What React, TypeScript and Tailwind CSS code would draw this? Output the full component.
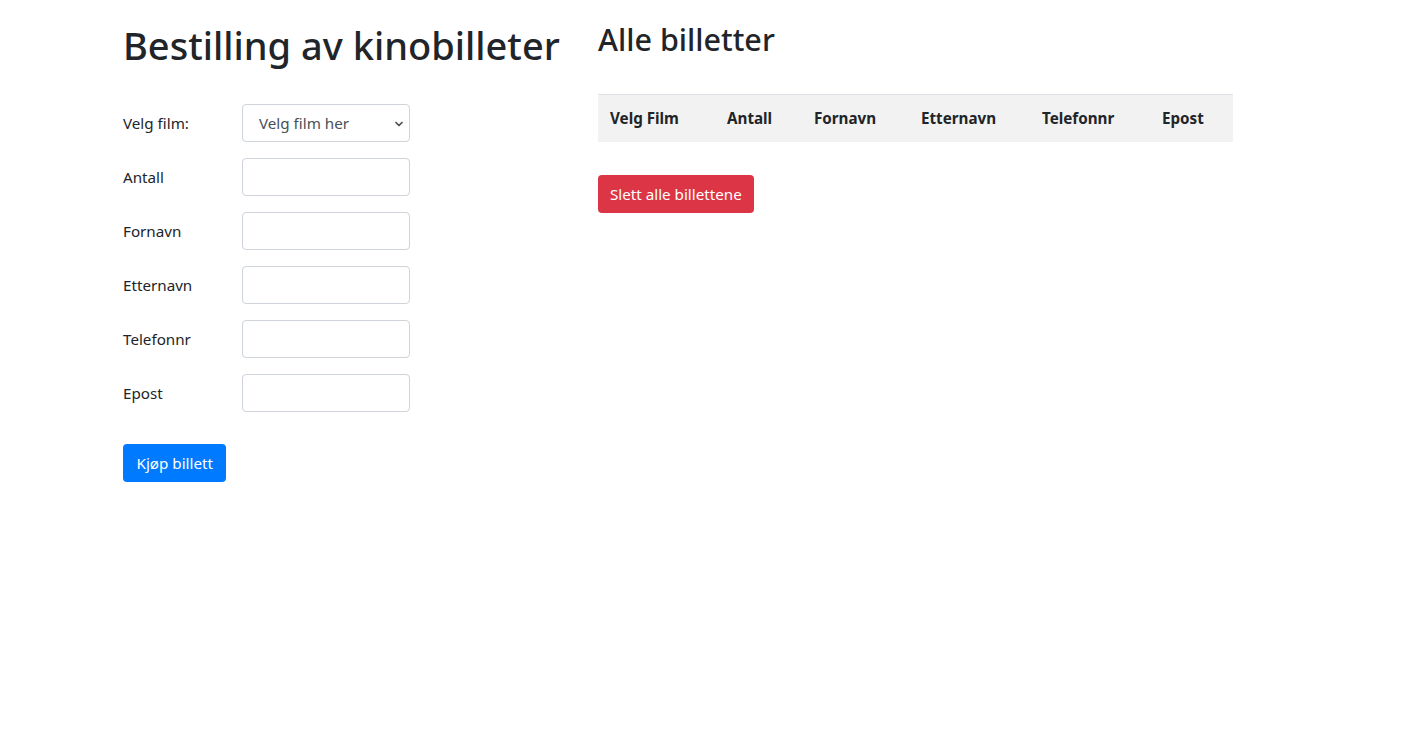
import { ChevronDown } from "lucide-react";

const FONT = "font-['Noto_Sans',sans-serif]";

const fields = ["Antall", "Fornavn", "Etternavn", "Telefonnr", "Epost"];

const columns = [
  { label: "Velg Film", w: "w-[117px]" },
  { label: "Antall", w: "w-[87px]" },
  { label: "Fornavn", w: "w-[107px]" },
  { label: "Etternavn", w: "w-[121px]" },
  { label: "Telefonnr", w: "w-[120px]" },
  { label: "Epost", w: "w-[83px]" },
];

function Row({ label, children }: { label: string; children: React.ReactNode }) {
  return (
    <div className="flex items-center">
      <label className="w-[119px] text-[15.2px] leading-6">{label}</label>
      {children}
    </div>
  );
}

export default function App() {
  return (
    <div className={`min-h-screen bg-white text-[#212529] ${FONT}`}>
      <div className="flex pl-[123px] pt-[21px]">
        {/* bestilling */}
        <div className="w-[475px]">
          <h1 className="text-[38px] h-[48px] leading-[48px] font-medium mb-[35px]">
            Bestilling av kinobilleter
          </h1>
          <div className="flex flex-col gap-4">
            <Row label="Velg film:">
              <div className="relative w-[168px] h-[38px] border border-[#ced4da] rounded-[4px] flex items-center pl-4 text-[15.2px] text-[#495057]">
                Velg film her
                <ChevronDown className="absolute right-[4px] top-[13px] w-3 h-3" strokeWidth={3.5} />
              </div>
            </Row>
            {fields.map((f) => (
              <Row key={f} label={f}>
                <input className="w-[168px] h-[38px] border border-[#ced4da] rounded-[4px] px-3 outline-none" />
              </Row>
            ))}
          </div>
          <button className="mt-8 h-[38px] px-[13.5px] rounded-[4px] bg-[#007bff] text-white text-[15.2px]">
            Kjøp billett
          </button>
        </div>

        {/* billetter */}
        <div className="w-[635px]">
          <h2 className="text-[30.5px] h-[38px] leading-[38px] font-medium mt-[-1px] mb-[36px]">Alle billetter</h2>
          <div className="flex border-t border-[#dee2e6] bg-[#f2f2f2] h-[48px] items-center">
            {columns.map((c) => (
              <div key={c.label} className={`${c.w} px-3 font-bold text-[15.2px]`}>
                {c.label}
              </div>
            ))}
          </div>
          <button className="mt-[33px] h-[38px] px-3 rounded-[4px] bg-[#dc3545] text-white text-[15.2px]">
            Slett alle billettene
          </button>
        </div>
      </div>
    </div>
  );
}
